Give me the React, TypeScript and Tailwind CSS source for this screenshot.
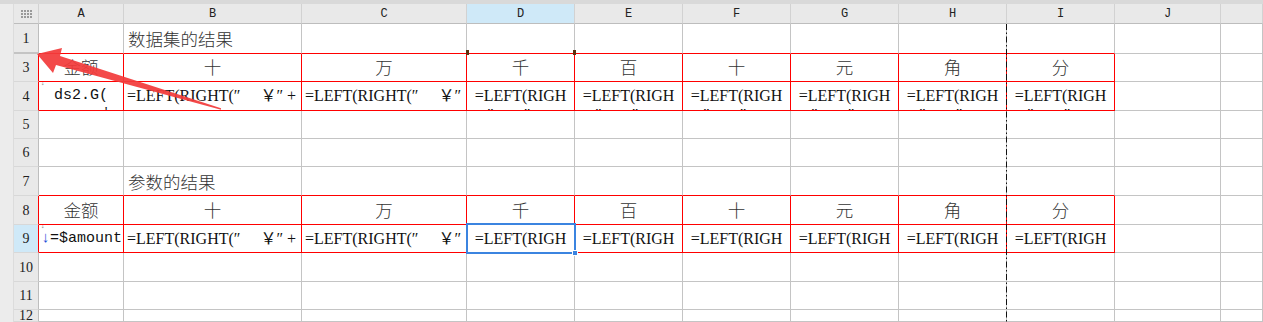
import React from "react";

const COLS = ["A", "B", "C", "D", "E", "F", "G", "H", "I", "J", ""];
const ROWS = [1, 3, 4, 5, 6, 7, 8, 9, 10, 11, 12];
const UNITS = ["十", "万", "千", "百", "十", "元", "角", "分"];

const cjk = { fontFamily: '"Noto Sans CJK SC", "Noto Sans", sans-serif' };
const serif = { fontFamily: '"Liberation Serif", "Noto Sans CJK SC", serif' };
const mono = { fontFamily: '"Liberation Mono", "Noto Sans CJK SC", monospace' };

function GridIcon() {
  return (
    <div className="grid grid-cols-4 gap-[1px]">
      {Array.from({ length: 12 }).map((_, i) => (
        <span key={i} className="block w-[2px] h-[2px] bg-[#9a9a9a]" />
      ))}
    </div>
  );
}

function Formula({ text, align, marks }: { text: string; align: "left" | "center"; marks?: boolean }) {
  return (
    <div
      className={
        align === "left"
          ? "pt-[4px] pl-[3px] whitespace-pre text-left text-[16px] leading-[20px] text-[#111]"
          : "pt-[4px] whitespace-pre text-center text-[16px] leading-[20px] text-[#111]"
      }
      style={serif}
    >
      <div>{text}</div>
      {marks && (
        <div className="-mt-[1px] pl-[20px] text-left">
          <span>″</span>
          <span className="ml-[30px]">″</span>
        </div>
      )}
    </div>
  );
}

function cellContent(row: number, col: number) {
  if ((row === 1 || row === 7) && col === 1) {
    return (
      <div className="h-full flex items-center pl-[4px] pt-[2px] text-[17.5px] font-light text-[#333] whitespace-nowrap" style={cjk}>
        {row === 1 ? "数据集的结果" : "参数的结果"}
      </div>
    );
  }
  if (row === 3 || row === 8) {
    if (col > 8) return null;
    return (
      <div className="h-full flex items-center justify-center text-[17.5px] font-light text-[#333]" style={cjk}>
        {col === 0 ? "金额" : UNITS[col - 1]}
      </div>
    );
  }
  if (row === 4 || row === 9) {
    if (col === 0) {
      return (
        <div className="pt-[4px] text-[15px] leading-[20px] text-[#111]" style={mono}>
          <div className="h-0 pl-[1px] -mt-[7px] mb-[7px] text-[9px] leading-[9px] text-[#888]">↓</div>
          {row === 4 ? (
            <>
              <div className="text-center">ds2.G(</div>
              <div className="-mt-[3px] whitespace-pre text-center text-[12px]">{"       '"}</div>
            </>
          ) : (
            <div className="whitespace-nowrap pl-[2px]">
              <span className="text-[#1d4fd8] font-bold">↓</span>=$amount
            </div>
          )}
        </div>
      );
    }
    if (col === 1) return <Formula text={"=LEFT(RIGHT(″\u3000 ￥″ +"} align="left" />;
    if (col === 2) return <Formula text={"=LEFT(RIGHT(″\u3000 ￥″"} align="left" />;
    if (col <= 8) return <Formula text="=LEFT(RIGH" align="center" marks />;
  }
  return null;
}

export default function App() {
  return (
    <div className="relative w-[1263px] h-[322px] overflow-hidden bg-white">
      <div className="h-[4px] bg-[#d9d9d9]" />
      <div className="flex">
        <div className="w-[14px] h-[318px] bg-[#ececec] border-r border-[#dcdcdc]" />
        <div className="flex-1 grid grid-cols-[25px_85px_178px_165px_108px_108px_108px_108px_108px_108px_106px_1fr] grid-rows-[20px_30px_28px_29px_28px_28px_29px_29px_28px_29px_28px_12px]">
          {/* header row */}
          <div className="flex items-center justify-center bg-[#e9e9e9] border-r border-b border-r-[#d2d2d2] border-b-[#bdbdbd]">
            <GridIcon />
          </div>
          {COLS.map((c, i) => (
            <div
              key={"h" + i}
              className={
                c === "D"
                  ? "flex items-center justify-center pt-[1px] text-[12px] text-[#222] bg-[#cfe9f8] border-r border-b border-r-[#d2d2d2] border-b-[#bdbdbd]"
                  : "flex items-center justify-center pt-[1px] text-[12px] text-[#222] bg-[#e9e9e9] border-r border-b border-r-[#d2d2d2] border-b-[#bdbdbd]"
              }
              style={mono}
            >
              {c}
            </div>
          ))}

          {ROWS.map((r) => {
            const redRow = r === 3 || r === 4 || r === 8 || r === 9;
            const redBottom = redRow || r === 1 || r === 7;
            return (
              <React.Fragment key={"r" + r}>
                <div
                  className={[
                    "flex items-center justify-center text-[14px] text-[#222]",
                    r === 9 ? "bg-[#cfe9f8]" : "bg-[#e9e9e9]",
                    r === 1 ? "border-r border-b-2 border-b-[#c4c4c4]" : "border-r border-b border-b-[#d8d8d8]",
                    redRow ? "border-r-[#ff0000]" : "border-r-[#bdbdbd]",
                  ].join(" ")}
                  style={serif}
                >
                  {r}
                </div>
                {COLS.map((_, ci) => {
                  const inTable = ci <= 8;
                  const cls = [
                    "overflow-hidden border-r border-b",
                    inTable && redRow ? "border-r-[#ff0000]" : "border-r-[#c4c4c4]",
                    inTable && redBottom ? "border-b-[#ff0000]" : "border-b-[#c4c4c4]",
                  ].join(" ");
                  return (
                    <div key={r + "-" + ci} className={cls}>
                      {cellContent(r, ci)}
                    </div>
                  );
                })}
              </React.Fragment>
            );
          })}
        </div>
      </div>

      {/* overlays: page break, selection, markers, annotation arrow */}
      <svg className="absolute left-0 top-0 pointer-events-none" width="1263" height="322">
        <line x1="1006.5" y1="24" x2="1006.5" y2="322" stroke="#111" strokeWidth="1" strokeDasharray="6 2.5 1.5 2.5" />
        <rect x="466" y="50" width="3" height="5" fill="#5a3210" />
        <rect x="573" y="50" width="3" height="5" fill="#5a3210" />
        <rect x="467" y="224" width="108" height="29" fill="none" stroke="#3b84e0" strokeWidth="2" />
        <rect x="572.5" y="250.5" width="5" height="5" fill="#3b84e0" stroke="#fff" strokeWidth="1" />
        <polygon
          points="37,54 62,48 60,56 221,108.2 221,109.8 56,65 53,73"
          fill="#f23b3b"
          fillOpacity="0.93"
        />
      </svg>
    </div>
  );
}
